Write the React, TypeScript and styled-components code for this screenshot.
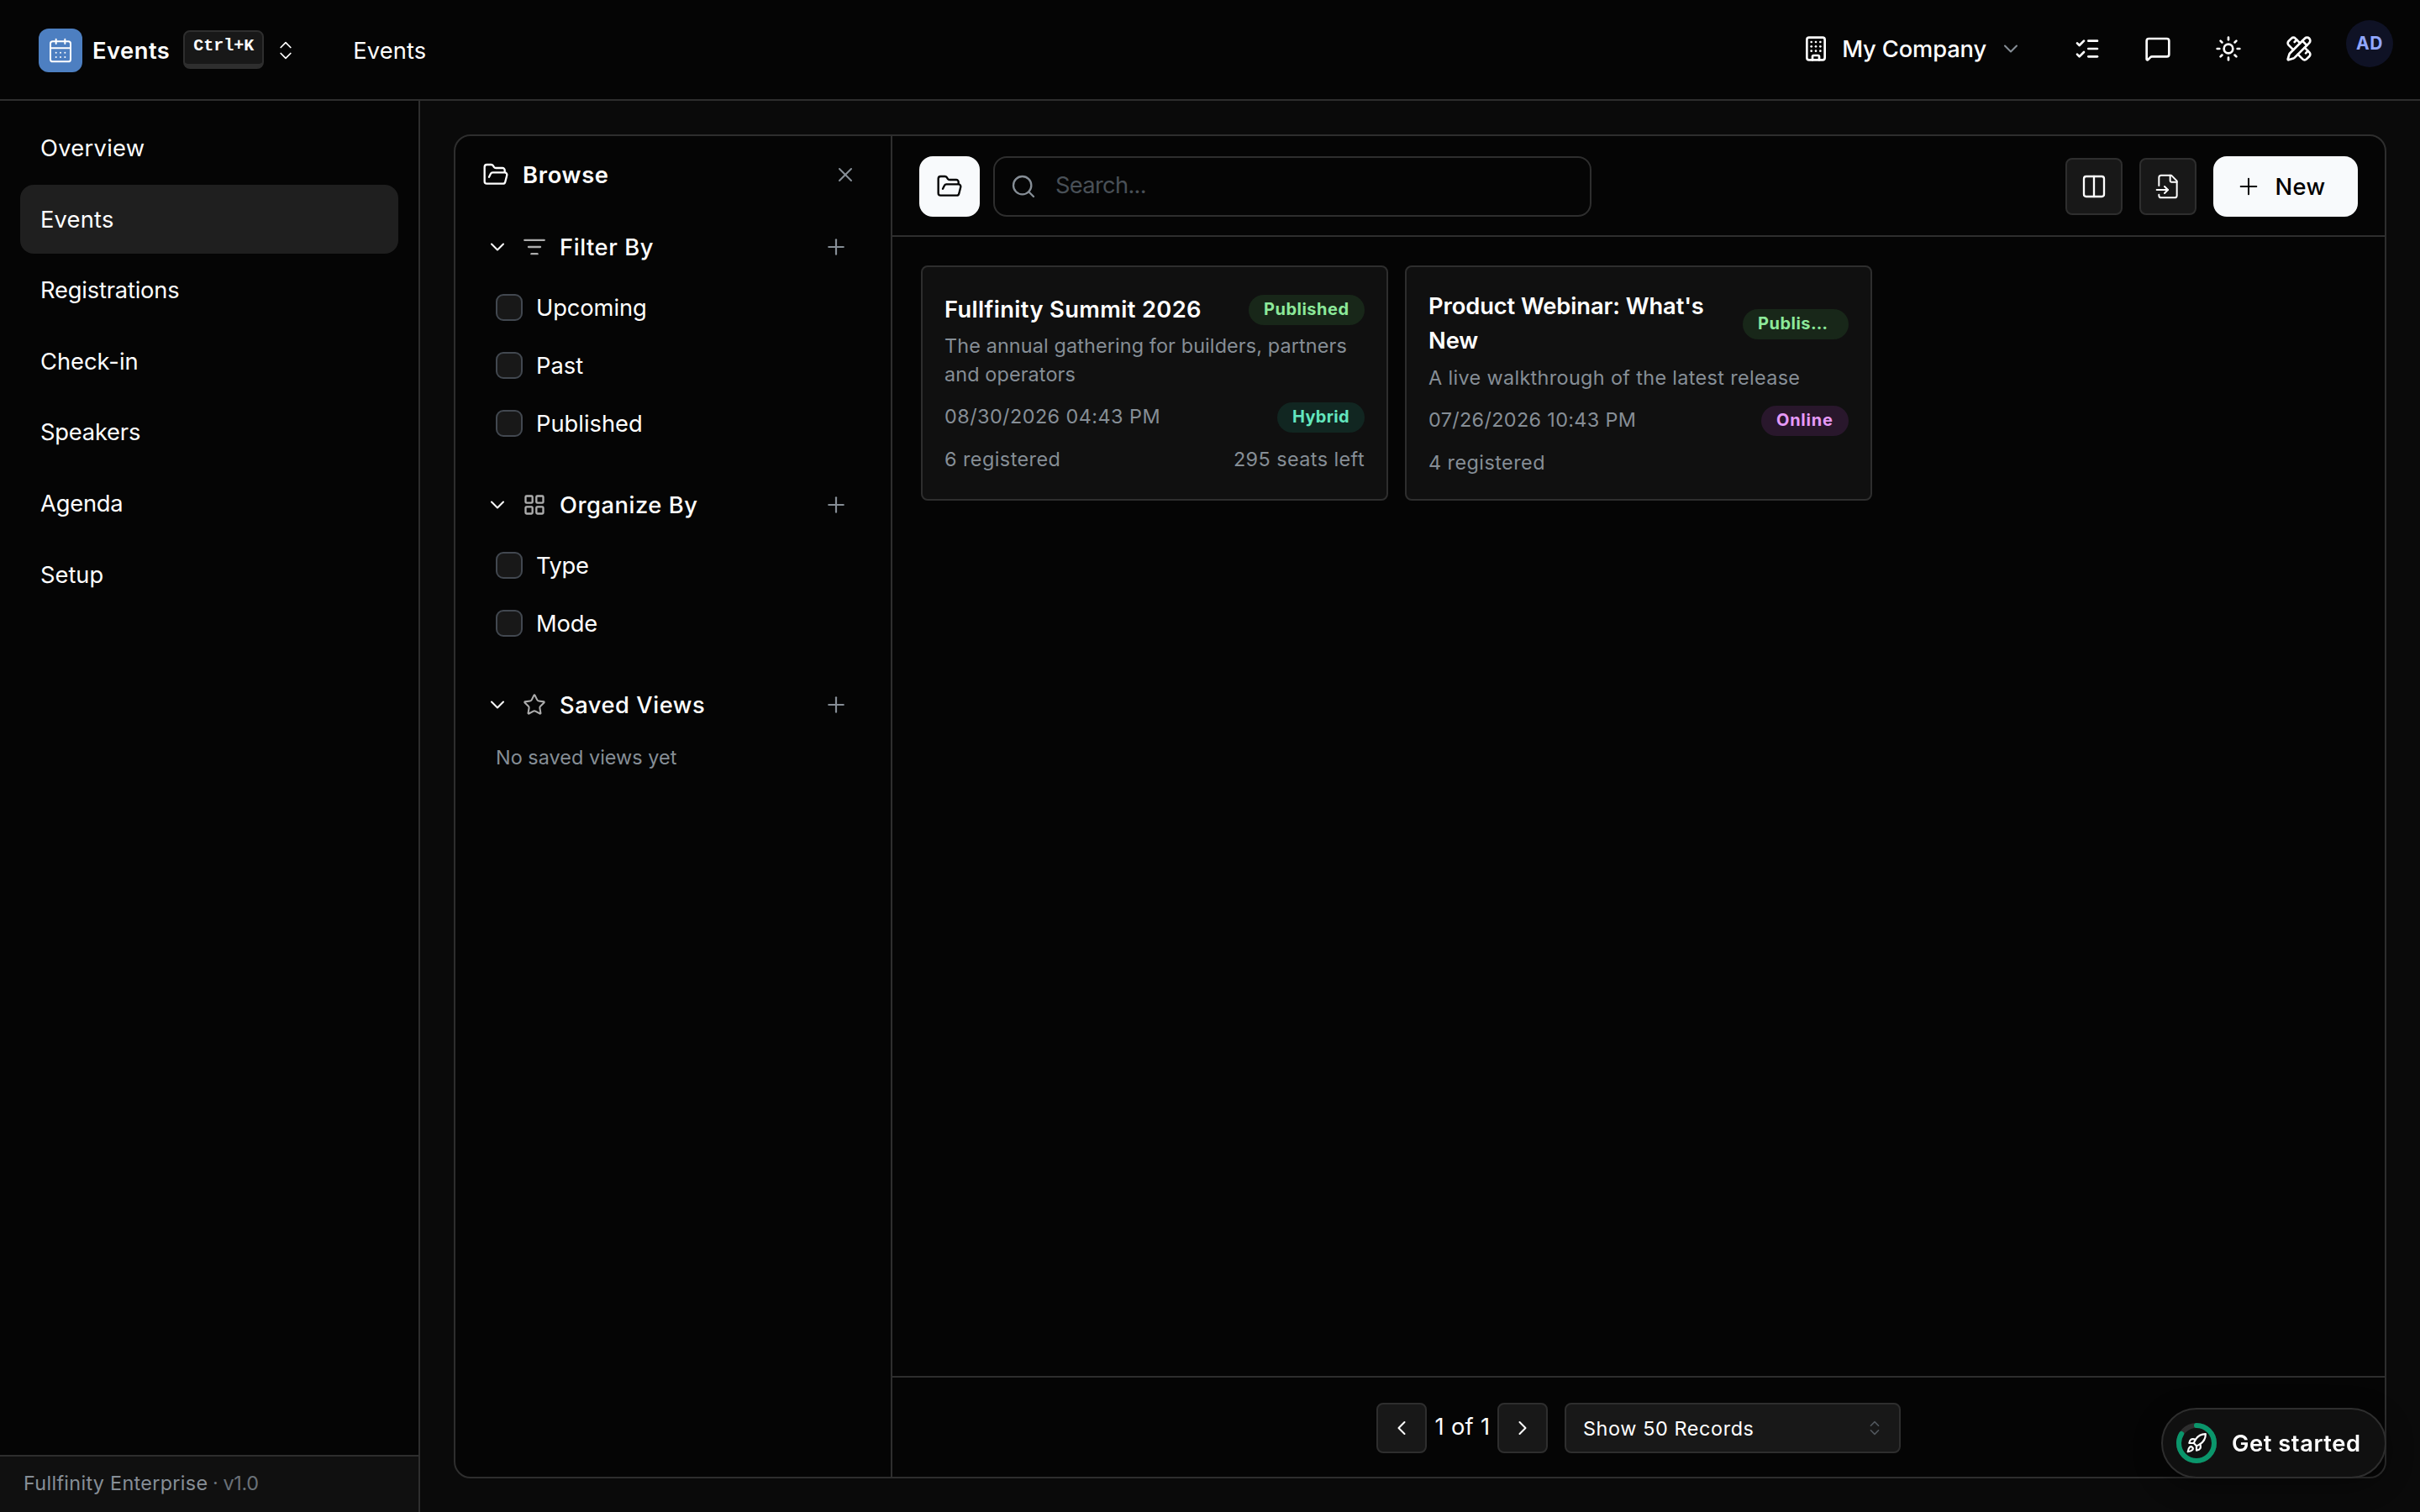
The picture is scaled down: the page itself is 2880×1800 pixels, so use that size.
import React from "react";
import styled, { createGlobalStyle } from "styled-components";
import {
  Building,
  CalendarDays,
  ChevronDown,
  ChevronLeft,
  ChevronRight,
  ChevronsUpDown,
  Columns2,
  FolderOpen,
  LayoutGrid,
  ListChecks,
  ListFilter,
  MessageSquare,
  PencilRuler,
  Plus,
  Rocket,
  Search,
  Star,
  Sun,
  X,
} from "lucide-react";

const color = {
  surface: "#050505",
  page: "#0a0a0a",
  raised: "#101010",
  control: "#181818",
  line: "#2e2e2e",
  text: "#ffffff",
  muted: "#868e96",
  light: "#f8fafc",
};

const GlobalStyle = createGlobalStyle`
  *, *::before, *::after { box-sizing: border-box; }
  body {
    margin: 0;
    background: ${color.page};
    color: ${color.text};
    font-family: Inter, "Liberation Sans", sans-serif;
    font-size: 27.3px;
    line-height: 40px;
  }
  button { font: inherit; color: inherit; cursor: pointer; }
  svg { display: block; flex: none; }
`;

/* A run of text; $track is its letter spacing in pixels. */
const Label = styled.span<{ $track?: number }>`
  padding-top: 2px;
  letter-spacing: ${(p) => p.$track ?? 0}px;
  white-space: nowrap;
`;

const Strong = styled(Label)`
  font-weight: 600;
`;

const Medium = styled(Label)`
  font-weight: 500;
`;

const Shell = styled.div`
  display: flex;
  flex-direction: column;
  width: 100vw;
  height: 100vh;
  overflow: hidden;
`;

/* ---------- header ---------- */

const Header = styled.header`
  display: flex;
  justify-content: space-between;
  flex: none;
  height: 120px;
  padding: 0 32px 0 46px;
  background: ${color.surface};
  border-bottom: 2px solid ${color.line};
`;

const HeaderStart = styled.div`
  display: flex;
  align-items: center;
  height: 120px;
`;

const AppLogo = styled.div`
  display: grid;
  place-items: center;
  width: 52px;
  height: 52px;
  margin-right: 12px;
  border-radius: 12px;
  background: #4d7fc1;
`;

const Shortcut = styled.kbd`
  display: flex;
  align-items: flex-start;
  height: 46px;
  margin: 0 12px 2px 16px;
  padding: 0 10px;
  border: 2px solid ${color.line};
  border-bottom-width: 6px;
  border-radius: 8px;
  background: ${color.control};
  font: 700 20px/34px "Liberation Mono", monospace;
`;

const Crumb = styled(Label)`
  margin-left: 66px;
`;

const HeaderEnd = styled.div`
  display: flex;
  align-items: center;
  height: 116px;
`;

const Company = styled.div`
  display: flex;
  align-items: center;
  gap: 15px;
  margin-right: 61px;
`;

const HeaderIcons = styled.div`
  display: flex;
  gap: 52px;
  margin-right: 40px;
`;

const Avatar = styled.div`
  display: grid;
  place-items: center;
  width: 56px;
  height: 56px;
  margin-bottom: 12px;
  border-radius: 50%;
  background: #0f1225;
  color: #91a7ff;
  font-size: 21px;
  font-weight: 700;
  line-height: 56px;
  letter-spacing: 0.6px;
`;

/* ---------- sidebar ---------- */

const Body = styled.div`
  display: flex;
  flex: 1;
  min-height: 0;
`;

const Sidebar = styled.aside`
  display: flex;
  flex-direction: column;
  flex: none;
  width: 500px;
  background: ${color.surface};
  border-right: 2px solid ${color.line};
`;

const Nav = styled.nav`
  display: flex;
  flex-direction: column;
  flex: 1;
  gap: 2.6px;
  padding: 15.6px 24px 0;
`;

const NavItem = styled.a<{ $active?: boolean; $track: number }>`
  display: flex;
  align-items: center;
  height: 82px;
  padding: 1px 24px 0;
  border-radius: 16px;
  background: ${(p) => (p.$active ? "#1f1f1f" : "transparent")};
  letter-spacing: ${(p) => p.$track}px;
`;

const SidebarFooter = styled.footer`
  display: flex;
  align-items: center;
  gap: 5.5px;
  height: 68px;
  padding: 0 28px 4px;
  border-top: 2px solid ${color.line};
  background: ${color.raised};
  color: ${color.muted};
  font-size: 23.4px;
  line-height: 34px;
`;

const Version = styled(Label)`
  color: #6a7178;
`;

/* ---------- workspace ---------- */

const Main = styled.main`
  display: flex;
  flex: 1;
  min-width: 0;
  padding: 40px;
  background: ${color.page};
`;

const Panel = styled.section`
  display: flex;
  flex: 1;
  min-width: 0;
  border: 2px solid ${color.line};
  border-radius: 20px;
  background: ${color.surface};
  overflow: hidden;
`;

const Browse = styled.aside`
  flex: none;
  width: 520px;
  border-right: 2px solid ${color.line};
`;

const BrowseHeader = styled.div`
  display: flex;
  align-items: center;
  height: 92px;
  margin-bottom: 12px;
  padding: 0 40px 0 32px;

  svg:last-child {
    margin-left: auto;
    color: ${color.muted};
  }
`;

const BrowseTitle = styled(Strong)`
  margin-left: 16px;
`;

const Group = styled.div`
  margin-bottom: 34.5px;
`;

const GroupHeader = styled.div`
  display: flex;
  align-items: center;
  height: 56px;
  padding: 0 50px 0 36px;
`;

const GroupIcon = styled.span`
  margin: 0 16px;
  color: #adadad;
`;

const AddIcon = styled(Plus)`
  margin-left: auto;
  color: ${color.muted};
`;

const Options = styled.div`
  padding: 9.5px 0 0 48px;
`;

const Option = styled.label`
  display: flex;
  align-items: center;
  gap: 16px;
  height: 69px;
`;

const Checkbox = styled.span`
  width: 32px;
  height: 32px;
  border: 2px solid #424850;
  border-radius: 9px;
  background: ${color.control};
`;

const EmptyNote = styled.p`
  margin: 17.5px 0 0 48px;
  color: ${color.muted};
  font-size: 23.4px;
  line-height: 34px;
`;

const Content = styled.div`
  display: flex;
  flex-direction: column;
  flex: 1;
  min-width: 0;
`;

const Toolbar = styled.div`
  display: flex;
  align-items: center;
  flex: none;
  height: 120px;
  padding: 2px 32px 0;
  border-bottom: 2px solid ${color.line};
`;

const BrowseToggle = styled.button`
  display: grid;
  place-items: center;
  width: 72px;
  height: 72px;
  margin-right: 16px;
  padding: 0;
  border: 0;
  border-radius: 16px;
  background: ${color.light};
  color: #000;
`;

const SearchBox = styled.div`
  display: flex;
  align-items: center;
  gap: 22px;
  width: 712px;
  height: 72px;
  margin-right: auto;
  padding: 0 18px;
  border: 2px solid ${color.line};
  border-radius: 16px;
  color: ${color.muted};
`;

const Placeholder = styled(Label)`
  padding-bottom: 4px;
  color: #495057;
`;

const IconButton = styled.button<{ $size: number }>`
  display: grid;
  place-items: center;
  width: ${(p) => p.$size}px;
  height: ${(p) => p.$size}px;
  padding: 0;
  border: 2px solid ${color.line};
  border-radius: 8px;
  background: ${color.control};
`;

const ToolbarActions = styled.div`
  display: flex;
  align-items: center;
  gap: 20px;
`;

const NewButton = styled.button`
  display: flex;
  align-items: center;
  gap: 15.5px;
  width: 172px;
  height: 72px;
  padding: 0 0 0 26px;
  border: 0;
  border-radius: 16px;
  background: ${color.light};
  color: #000;
`;

const Cards = styled.div`
  display: flex;
  align-items: flex-start;
  flex: 1;
  gap: 20px;
  padding: 34px;
`;

const Card = styled.article`
  display: flex;
  flex-direction: column;
  justify-content: center;
  width: 556px;
  height: 280px;
  padding: 0 26px;
  border: 2px solid ${color.line};
  border-radius: 8px;
  background: ${color.raised};
  color: ${color.muted};
  font-size: 23.4px;
  line-height: 34px;
`;

const CardRow = styled.div`
  display: flex;
  align-items: center;
  justify-content: space-between;
`;

const CardTitle = styled.h3<{ $track: number }>`
  max-width: 345px;
  margin: 0;
  padding-top: 1px;
  color: ${color.text};
  font-size: 27.3px;
  font-weight: 600;
  line-height: 40.6px;
  letter-spacing: ${(p) => p.$track}px;
`;

const Summary = styled.p<{ $track: number }>`
  margin: 6px 0 16px;
  letter-spacing: ${(p) => p.$track}px;
`;

const DateLabel = styled(Label)`
  margin-top: -4px;
`;

const CardFoot = styled(CardRow)`
  margin-top: 13px;
`;

const tones = {
  green: ["#8ce99a", "#182719"],
  teal: ["#63e6be", "#112621"],
  grape: ["#e599f7", "#29172c"],
};
type Tone = keyof typeof tones;

const Badge = styled.span<{ $tone: Tone; $width: number; $track: number }>`
  flex: none;
  width: ${(p) => p.$width}px;
  height: 36px;
  padding: 0 17px 0 18px;
  border-radius: 18px;
  background: ${(p) => tones[p.$tone][1]};
  color: ${(p) => tones[p.$tone][0]};
  font-size: 20px;
  font-weight: 700;
  line-height: 34px;
  letter-spacing: ${(p) => p.$track}px;
`;

const BadgeText = styled.span`
  display: block;
  overflow: hidden;
  text-overflow: ellipsis;
  white-space: nowrap;
`;

const Pager = styled.footer`
  display: flex;
  align-items: center;
  justify-content: center;
  flex: none;
  height: 120px;
  padding-top: 2px;
  border-top: 2px solid ${color.line};
`;

const PageCount = styled(Label)`
  width: 84px;
  padding: 0 0 3px 9.5px;
`;

const PageSize = styled.div`
  display: flex;
  align-items: center;
  justify-content: space-between;
  width: 400px;
  height: 60px;
  margin-left: 20px;
  padding: 0 18px 0 20px;
  border: 2px solid ${color.line};
  border-radius: 8px;
  background: ${color.control};
  font-size: 23.4px;

  svg {
    color: #51575d;
  }
`;

/* ---------- floating launcher ---------- */

const GetStarted = styled.button`
  position: fixed;
  right: 40px;
  bottom: 40px;
  display: flex;
  align-items: center;
  gap: 18px;
  width: 268px;
  height: 84px;
  padding: 0 0 0 16px;
  border: 2px solid ${color.line};
  border-radius: 42px;
  background: ${color.raised};
  box-shadow: 0 8px 32px rgba(0, 0, 0, 0.4);
`;

const Ring = styled.span`
  display: grid;
  place-items: center;

  > svg {
    grid-area: 1 / 1;
  }
`;

const navItems: [string, number][] = [
  ["Overview", 0.3],
  ["Events", 0.2],
  ["Registrations", -0.18],
  ["Check-in", 0],
  ["Speakers", -0.2],
  ["Agenda", -0.2],
  ["Setup", 0],
];

const groups = [
  {
    title: "Filter By",
    track: 0.58,
    icon: <ListFilter size={28} />,
    options: [["Upcoming", -0.1], ["Past", 0], ["Published", 0]] as [string, number][],
  },
  {
    title: "Organize By",
    track: 0.55,
    icon: <LayoutGrid size={28} />,
    options: [["Type", -0.35], ["Mode", -0.2]] as [string, number][],
  },
];

const events = [
  {
    title: "Fullfinity Summit 2026",
    titleTrack: 0.37,
    statusWidth: 138,
    summary: "The annual gathering for builders, partners and operators",
    summaryTrack: 0.12,
    date: "08/30/2026 04:43 PM",
    dateTrack: 0.45,
    mode: "Hybrid",
    modeTone: "teal" as Tone,
    modeTrack: 0.3,
    registered: "6 registered",
    seats: "295 seats left",
  },
  {
    title: "Product Webinar: What's New",
    titleTrack: -0.09,
    statusWidth: 126,
    summary: "A live walkthrough of the latest release",
    summaryTrack: 0.35,
    date: "07/26/2026 10:43 PM",
    dateTrack: 0.34,
    mode: "Online",
    modeTone: "grape" as Tone,
    modeTrack: 0.75,
    registered: "4 registered",
    seats: "",
  },
];

const ImportIcon = () => (
  <svg
    width="32"
    height="32"
    viewBox="0 0 24 24"
    fill="none"
    stroke="currentColor"
    strokeWidth="1.5"
    strokeLinecap="round"
    strokeLinejoin="round"
  >
    <path d="M4 11.2V4a2 2 0 0 1 2-2h9l5 5v13a2 2 0 0 1-2 2H6a2 2 0 0 1-2-2v-.6" />
    <path d="M14 2v5a1 1 0 0 0 1 1h5" />
    <path d="M2 15h10" />
    <path d="m9 12 3 3-3 3" />
  </svg>
);

const ProgressRing = () => {
  const length = 2 * Math.PI * 21;
  return (
    <svg width="48" height="48" viewBox="0 0 48 48" fill="none" strokeWidth="6">
      <circle cx="24" cy="24" r="21" stroke={color.line} />
      <circle
        cx="24"
        cy="24"
        r="21"
        stroke="#0a966b"
        strokeLinecap="round"
        strokeDasharray={`${(length * 5) / 6} ${length}`}
        transform="rotate(-90 24 24)"
      />
    </svg>
  );
};

export default function App() {
  return (
    <>
      <GlobalStyle />
      <Shell>
        <Header>
          <HeaderStart>
            <AppLogo>
              <CalendarDays size={32} strokeWidth={1.5} />
            </AppLogo>
            <Strong $track={0.5}>Events</Strong>
            <Shortcut>Ctrl+K</Shortcut>
            <ChevronsUpDown size={28} strokeWidth={1.5} />
            <Crumb $track={0.1}>Events</Crumb>
          </HeaderStart>
          <HeaderEnd>
            <Company>
              <Building size={32} />
              <Medium $track={-0.13}>My Company</Medium>
              <ChevronDown size={28} strokeWidth={1.75} color={color.muted} />
            </Company>
            <HeaderIcons>
              <ListChecks size={32} />
              <MessageSquare size={32} />
              <Sun size={32} />
              <PencilRuler size={32} />
            </HeaderIcons>
            <Avatar>AD</Avatar>
          </HeaderEnd>
        </Header>

        <Body>
          <Sidebar>
            <Nav>
              {navItems.map(([name, track]) => (
                <NavItem key={name} $active={name === "Events"} $track={track}>
                  {name}
                </NavItem>
              ))}
            </Nav>
            <SidebarFooter>
              <Label $track={0.3}>Fullfinity Enterprise</Label>
              <Version $track={-0.35}>· v1.0</Version>
            </SidebarFooter>
          </Sidebar>

          <Main>
            <Panel>
              <Browse>
                <BrowseHeader>
                  <FolderOpen size={32} strokeWidth={1.75} />
                  <BrowseTitle $track={0.7}>Browse</BrowseTitle>
                  <X size={28} strokeWidth={1.75} />
                </BrowseHeader>
                {groups.map((group) => (
                  <Group key={group.title}>
                    <GroupHeader>
                      <ChevronDown size={28} strokeWidth={1.75} />
                      <GroupIcon>{group.icon}</GroupIcon>
                      <Medium $track={group.track}>{group.title}</Medium>
                      <AddIcon size={30} strokeWidth={1.75} />
                    </GroupHeader>
                    <Options>
                      {group.options.map(([name, track]) => (
                        <Option key={name}>
                          <Checkbox />
                          <Label $track={track}>{name}</Label>
                        </Option>
                      ))}
                    </Options>
                  </Group>
                ))}
                <GroupHeader>
                  <ChevronDown size={28} strokeWidth={1.75} />
                  <GroupIcon>
                    <Star size={28} strokeWidth={1.75} />
                  </GroupIcon>
                  <Medium $track={0.55}>Saved Views</Medium>
                  <AddIcon size={30} strokeWidth={1.75} />
                </GroupHeader>
                <EmptyNote>
                  <Label $track={0.04}>No saved views yet</Label>
                </EmptyNote>
              </Browse>

              <Content>
                <Toolbar>
                  <BrowseToggle>
                    <FolderOpen size={32} strokeWidth={1.75} />
                  </BrowseToggle>
                  <SearchBox>
                    <Search size={32} strokeWidth={1.75} />
                    <Placeholder $track={-0.7}>Search...</Placeholder>
                  </SearchBox>
                  <ToolbarActions>
                    <IconButton $size={68}>
                      <Columns2 size={32} strokeWidth={1.75} />
                    </IconButton>
                    <IconButton $size={68}>
                      <ImportIcon />
                    </IconButton>
                    <NewButton>
                      <Plus size={32} strokeWidth={1.5} />
                      <Medium $track={0.4}>New</Medium>
                    </NewButton>
                  </ToolbarActions>
                </Toolbar>

                <Cards>
                  {events.map((event) => (
                    <Card key={event.title}>
                      <CardRow>
                        <CardTitle $track={event.titleTrack}>{event.title}</CardTitle>
                        <Badge $tone="green" $width={event.statusWidth} $track={0.5}>
                          <BadgeText>Published</BadgeText>
                        </Badge>
                      </CardRow>
                      <Summary $track={event.summaryTrack}>{event.summary}</Summary>
                      <CardRow>
                        <DateLabel $track={event.dateTrack}>{event.date}</DateLabel>
                        <Badge $tone={event.modeTone} $width={104} $track={event.modeTrack}>
                          {event.mode}
                        </Badge>
                      </CardRow>
                      <CardFoot>
                        <Label $track={0.45}>{event.registered}</Label>
                        <Label $track={0.43}>{event.seats}</Label>
                      </CardFoot>
                    </Card>
                  ))}
                </Cards>

                <Pager>
                  <IconButton $size={60}>
                    <ChevronLeft size={28} strokeWidth={1.75} />
                  </IconButton>
                  <PageCount $track={0.3}>1 of 1</PageCount>
                  <IconButton $size={60}>
                    <ChevronRight size={28} strokeWidth={1.75} />
                  </IconButton>
                  <PageSize>
                    <Label $track={0.6}>Show 50 Records</Label>
                    <ChevronsUpDown size={22} strokeWidth={1.75} />
                  </PageSize>
                </Pager>
              </Content>
            </Panel>
          </Main>
        </Body>
      </Shell>

      <GetStarted>
        <Ring>
          <ProgressRing />
          <Rocket size={26} />
        </Ring>
        <Strong $track={0.55}>Get started</Strong>
      </GetStarted>
    </>
  );
}
